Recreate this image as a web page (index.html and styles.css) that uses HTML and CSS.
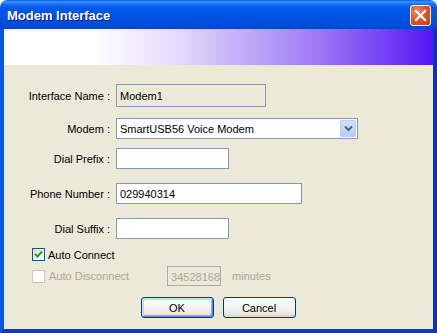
FILE: index.html
```html
<!DOCTYPE html>
<html>
<head>
<meta charset="utf-8">
<link rel="stylesheet" href="styles.css">
</head>
<body>
<div class="window">
  <div class="titlebar">
    <span class="title">Modem Interface</span>
    <span class="close">
      <svg width="13" height="13" viewBox="0 0 13 13"><path d="M2 2 L11 11 M11 2 L2 11" stroke="#fff" stroke-width="2.2" stroke-linecap="square"/></svg>
    </span>
  </div>
  <div class="frame">
    <div class="banner"></div>
    <div class="form">
      <div class="row r1">
        <label class="lbl">Interface Name :</label>
        <div class="field readonly w150 h23">Modem1</div>
      </div>
      <div class="row r2">
        <label class="lbl">Modem :</label>
        <div class="field select w242">
          <span>SmartUSB56 Voice Modem</span>
          <span class="dd">
            <svg width="9" height="7" viewBox="0 0 9 7"><path d="M1 1.5 L4.5 5 L8 1.5" fill="none" stroke="#4d6185" stroke-width="2"/></svg>
          </span>
        </div>
      </div>
      <div class="row r3">
        <label class="lbl">Dial Prefix :</label>
        <div class="field w113"></div>
      </div>
      <div class="row r4">
        <label class="lbl">Phone Number :</label>
        <div class="field w186">029940314</div>
      </div>
      <div class="row r5">
        <label class="lbl">Dial Suffix :</label>
        <div class="field w113"></div>
      </div>
      <div class="check-row c1">
        <span class="cb checked">
          <svg width="9" height="9" viewBox="0 0 9 9"><path d="M1 4 L3.5 6.5 L8 1.5" fill="none" stroke="#21a121" stroke-width="2"/></svg>
        </span>
        <span class="cb-text">Auto Connect</span>
      </div>
      <div class="check-row c2 disabled">
        <span class="cb"></span>
        <span class="cb-text">Auto Disconnect</span>
        <div class="field dis">34528168</div>
        <span class="unit">minutes</span>
      </div>
      <div class="buttons">
        <button class="btn default">OK</button>
        <button class="btn">Cancel</button>
      </div>
    </div>
  </div>
</div>
</body>
</html>
```

FILE: styles.css
```css
html, body {
  margin: 0;
  padding: 0;
  background: #ffffff;
}
.window {
  width: 437px;
  height: 333px;
  display: flex;
  flex-direction: column;
  font-family: "Liberation Sans", Arial, sans-serif;
  font-size: 11px;
  color: #000;
}
.titlebar {
  height: 29px;
  flex: none;
  display: flex;
  align-items: center;
  padding-left: 7px;
  border-radius: 7px 7px 0 0;
  background: linear-gradient(to bottom, #0a5ee8 0px, #3d95ff 2px, #1a6ef5 4px, #0058e6 8px, #0054e3 16px, #004ddb 24px, #0046cf 29px);
}
.title {
  font-family: "Liberation Sans", Arial, sans-serif;
  font-weight: bold;
  font-size: 13px;
  color: #fff;
  text-shadow: 1px 1px 0 #0a1883;
  margin-top: 2px;
}
.close {
  margin-left: auto;
  margin-right: 6px;
  margin-top: 2px;
  width: 19px;
  height: 19px;
  border: 1px solid #fff;
  border-radius: 3px;
  background: radial-gradient(circle at 30% 30%, #f08a64 0%, #e2532a 50%, #c63c14 100%);
  display: flex;
  align-items: center;
  justify-content: center;
}
.frame {
  flex: 1;
  display: flex;
  flex-direction: column;
  background: #ece9d8;
  border-left: 4px solid #0856e8;
  border-right: 4px solid #0731c4;
  border-bottom: 4px solid #0737cf;
}
.banner {
  height: 36px;
  flex: none;
  background: linear-gradient(to right, #ffffff 0%, #ffffff 21%, #e4dcfb 40%, #c3aff8 55%, #a582f6 70%, #7e4ef5 85%, #5416f4 100%);
}
.form {
  display: flex;
  flex-direction: column;
}
.row {
  display: flex;
  align-items: flex-start;
}
.lbl {
  width: 106px;
  flex: none;
  text-align: right;
  margin-right: 6px;
  margin-top: 5px;
  white-space: nowrap;
}
.r1 { margin-top: 19px; }
.r1 .lbl { margin-top: 6px; }
.r2 { margin-top: 11px; }
.r3 { margin-top: 9px; }
.r4 { margin-top: 14px; }
.r5 { margin-top: 14px; }
.field {
  box-sizing: border-box;
  height: 21px;
  border: 1px solid #7f9db9;
  background: #fff;
  padding: 3px 0 0 3px;
  line-height: 14px;
  white-space: nowrap;
}
.readonly { background: #ece9d8; }
.h23 { height: 23px; padding-top: 4px; }
.w150 { width: 150px; }
.w242 { width: 242px; }
.w113 { width: 113px; }
.w186 { width: 186px; }
.select {
  display: flex;
  align-items: flex-start;
  padding: 3px 1px 0 3px;
}
.select span:first-child { flex: 1; }
.dd {
  box-sizing: border-box;
  width: 16px;
  height: 17px;
  margin-top: -2px;
  border: 1px solid #b9cdf8;
  border-radius: 2px;
  background: linear-gradient(to bottom, #d4e2fe, #b8cbf8);
  display: flex;
  align-items: center;
  justify-content: center;
}
.check-row {
  display: flex;
  align-items: center;
  padding-left: 28px;
}
.c1 { margin-top: 9px; height: 13px; }
.c2 { margin-top: 5px; height: 20px; }
.cb {
  box-sizing: border-box;
  width: 13px;
  height: 13px;
  border: 1px solid #1c5180;
  background: linear-gradient(135deg, #dcdcd7, #ffffff);
  display: flex;
  align-items: center;
  justify-content: center;
  flex: none;
}
.cb-text { margin-left: 3px; }
.disabled .cb {
  border-color: #cac8bb;
  background: #fff;
}
.disabled .cb-text { color: #aca899; margin-left: 4px; }
.field.dis {
  width: 54px;
  height: 20px;
  margin-left: 38px;
  background: #ece9d8;
  border-color: #a5acb2;
  color: #aca899;
  padding: 3px 0 0 3px;
}
.unit {
  margin-left: 11px;
  color: #aca899;
}
.buttons {
  display: flex;
  justify-content: center;
  gap: 9px;
  margin-top: 11px;
  padding-right: 1px;
}
.btn {
  box-sizing: border-box;
  width: 73px;
  height: 21px;
  font-family: "Liberation Sans", Arial, sans-serif;
  font-size: 11px;
  color: #000;
  border: 1px solid #003c74;
  border-radius: 3px;
  background: linear-gradient(to bottom, #ffffff 0%, #f6f5f1 40%, #ecebe6 80%, #d6d0c5 100%);
  padding: 0;
}
.btn.default {
  box-shadow: inset 1px 1px 0 #cee7ff, inset -1px -1px 0 #6982ee, inset 2px 2px 0 #bcd4f6, inset -2px -2px 0 #89adf4;
}
```
